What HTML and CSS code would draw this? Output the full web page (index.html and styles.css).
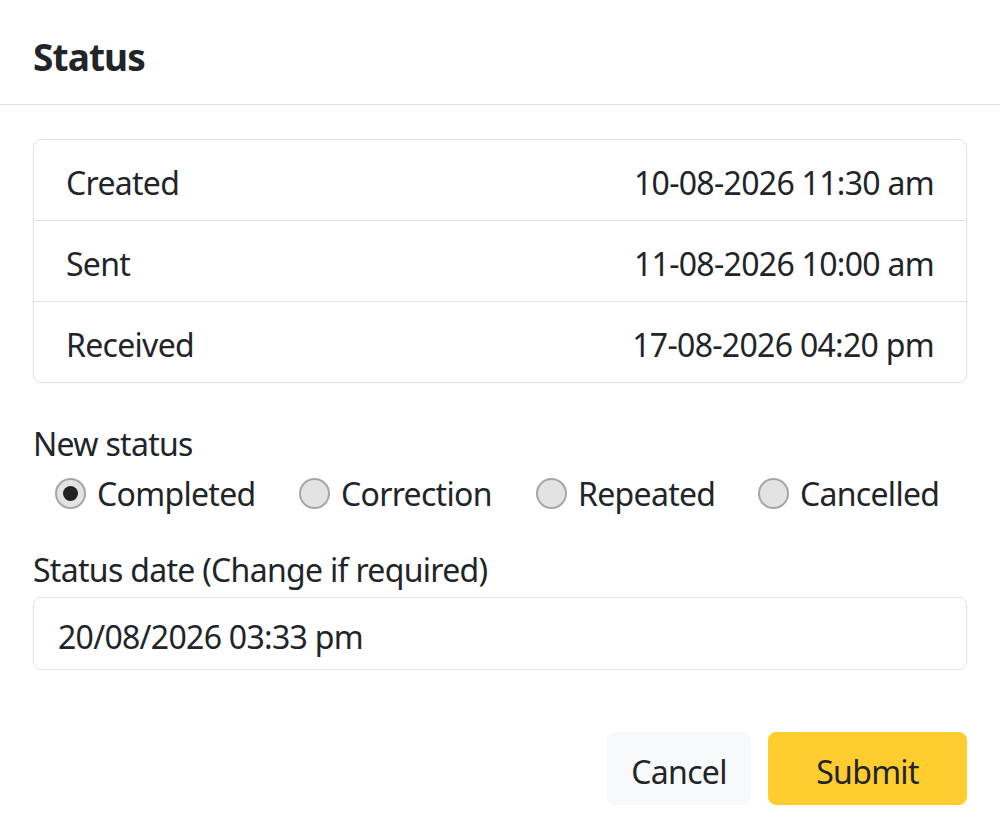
FILE: index.html
```html
<!DOCTYPE html>
<html lang="en">
<head>
<meta charset="utf-8">
<title>Status</title>
<link rel="stylesheet" href="styles.css">
</head>
<body>
<div class="modal">
  <header class="modal-header">
    <h1 class="modal-title">Status</h1>
    <button class="btn-close" type="button" aria-label="Close"></button>
  </header>
  <main class="modal-body">
    <ul class="list-group">
      <li class="list-item"><span>Created</span><span>10-08-2026 11:30 am</span></li>
      <li class="list-item"><span>Sent</span><span>11-08-2026 10:00 am</span></li>
      <li class="list-item"><span>Received</span><span>17-08-2026 04:20 pm</span></li>
    </ul>
    <div class="field-label first">New status</div>
    <div class="radio-row">
      <label class="radio"><span class="radio-dot checked"></span>Completed</label>
      <label class="radio"><span class="radio-dot"></span>Correction</label>
      <label class="radio"><span class="radio-dot"></span>Repeated</label>
      <label class="radio"><span class="radio-dot"></span>Cancelled</label>
    </div>
    <div class="field-label second">Status date (Change if required)</div>
    <div class="input">20/08/2026 03:33 pm</div>
  </main>
  <footer class="modal-footer">
    <button class="btn btn-light" type="button">Cancel</button>
    <button class="btn btn-warning" type="button">Submit</button>
  </footer>
</div>
</body>
</html>
```

FILE: styles.css
```css
* { box-sizing: border-box; }
html, body { margin: 0; padding: 0; background: #fff; }
body {
  font-family: "Noto Sans", "Open Sans", sans-serif;
  font-size: 32px;
  line-height: 48px;
  letter-spacing: -0.7px;
  color: #212529;
}
.modal { width: 1000px; height: 840px; background: #fff; }
.modal-header {
  height: 105px;
  border-bottom: 1px solid #dee2e6;
  display: flex;
  align-items: flex-start;
  justify-content: space-between;
  padding: 0 32px 0 33px;
}
.modal-title {
  margin: 0;
  padding-top: 27px;
  font-size: 37px;
  line-height: 60px;
  font-weight: 700;
  letter-spacing: -0.9px;
  color: #212529;
}
.btn-close {
  width: 32px; height: 32px;
  margin-top: 37px;
  border: 0;
  background: transparent;
  opacity: 0.05;
}
.modal-body { padding: 34px 33px 0 33px; }
.list-group {
  list-style: none;
  margin: 0;
  padding: 0;
  border: 1px solid #dee2e6;
  border-radius: 8px;
}
.list-item {
  display: flex;
  justify-content: space-between;
  padding: 19px 32px 13px;
  line-height: 48px;
  border-top: 1px solid #dee2e6;
}
.list-item:first-child { border-top: 0; }
.field-label { line-height: 48px; }
.field-label.first { margin-top: 37px; }
.field-label.second { margin-top: 28px; }
.radio-row {
  display: grid;
  grid-template-columns: 244px 237px 222px auto;
  padding-left: 22px;
  margin-top: 2px;
  height: 48px;
}
.radio {
  display: flex;
  align-items: center;
  gap: 11px;
  line-height: 48px;
  white-space: nowrap;
}
.radio-dot {
  flex: none;
  width: 31px; height: 31px;
  margin-top: -2px;
  border-radius: 50%;
  border: 2px solid #a6a6a6;
  background: #e3e3e3;
  display: inline-flex;
  align-items: center;
  justify-content: center;
}
.radio-dot.checked::after {
  content: "";
  width: 15px; height: 15px;
  border-radius: 50%;
  background: #222;
}
.input {
  margin-top: 3px;
  height: 73px;
  border: 1px solid #dee2e6;
  border-radius: 8px;
  padding: 15px 24px 9px;
  line-height: 48px;
}
.modal-footer {
  display: flex;
  justify-content: flex-end;
  gap: 17px;
  padding: 62px 33px 0 33px;
}
.btn {
  height: 73px;
  padding: 5px 0 0;
  border: 1px solid transparent;
  border-radius: 8px;
  font-family: inherit;
  font-size: 32px;
  letter-spacing: -0.7px;
  color: #212529;
}
.btn-light { width: 144px; background: #f8f9fa; border-color: #f8f9fa; }
.btn-warning { width: 199px; background: #ffcd30; border-color: #ffcd30; }
```
